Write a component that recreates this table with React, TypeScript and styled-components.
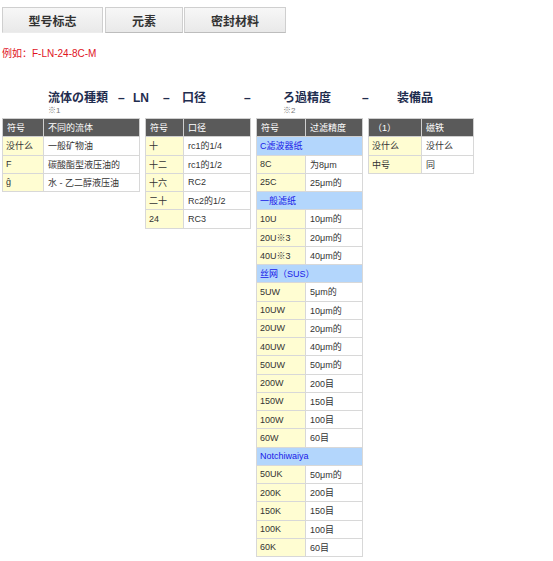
import React from "react";
import styled, { createGlobalStyle } from "styled-components";

const Global = createGlobalStyle`
  html, body { margin: 0; padding: 0; background: #fff; }
  body { font-family: "Liberation Sans", "Noto Sans CJK SC", sans-serif; color: #333; }
`;

const Page = styled.div`
  padding: 7px 0 0 2px;
  width: 553px;
  box-sizing: border-box;
`;

const Tabs = styled.div`
  display: flex;
  gap: 1px;
`;

const Tab = styled.div<{ $w: number; $active?: boolean }>`
  width: ${(p) => p.$w}px;
  height: 26px;
  box-sizing: border-box;
  display: flex;
  align-items: center;
  justify-content: center;
  font-size: 12px;
  font-weight: bold;
  color: #333;
  border: 1px solid #cfcfcf;
  border-bottom-color: ${(p) => (p.$active ? "#ececec" : "#bdbdbd")};
  background: linear-gradient(#f7f7f7, #e9e9e9);
  margin-right: ${(p) => (p.$active ? 1 : 0)}px;
`;

const Example = styled.div`
  margin-top: 15px;
  font-size: 10px;
  line-height: 12px;
  color: #e0141e;
`;

const Heading = styled.div`
  display: flex;
  margin-top: 31px;
  padding-left: 46px;
  height: 27px;
`;

const Term = styled.div<{ $w?: number }>`
  width: ${(p) => (p.$w ? `${p.$w}px` : "auto")};
  flex: none;
  display: flex;
  flex-direction: column;
`;

const TermText = styled.span`
  font-size: 12px;
  line-height: 14px;
  font-weight: bold;
  color: #1f2d4f;
  white-space: nowrap;
`;

const Note = styled.span`
  font-size: 8px;
  line-height: 10px;
  color: #777;
  margin-top: 1px;
`;

const Tables = styled.div`
  display: flex;
  align-items: flex-start;
  gap: 5px;
`;

const Table = styled.table<{ $w: number }>`
  width: ${(p) => p.$w}px;
  border-collapse: collapse;
  table-layout: fixed;
  font-size: 9px;
  border: 1px solid #d2d2d2;
`;

const Row = styled.tr`
  height: 18.25px;
`;

const Th = styled.th<{ $w?: number }>`
  box-sizing: border-box;
  width: ${(p) => (p.$w ? `${p.$w}px` : "auto")};
  background: #5a5a5a;
  color: #fff;
  font-weight: normal;
  text-align: left;
  padding: 0 4px;
  border: 1px solid #cfcfcf;
  white-space: nowrap;
  overflow: hidden;
`;

const Code = styled.td`
  background: #fffdd2;
  padding: 0 3px;
  border: 1px solid #d8d8d8;
  color: #333;
  white-space: nowrap;
  overflow: hidden;
`;

const Val = styled.td`
  background: #fff;
  padding: 0 4px;
  border: 1px solid #d8d8d8;
  color: #333;
  white-space: nowrap;
  overflow: hidden;
`;

const Group = styled.td`
  background: #b3d6fc;
  color: #1818e8;
  padding: 0 3px;
  border: 1px solid #d8d8d8;
  white-space: nowrap;
  overflow: hidden;
`;

type Item = [string, string] | string;

const DataTable = ({
  w,
  c1,
  h1,
  h2,
  items,
}: {
  w: number;
  c1: number;
  h1: string;
  h2: string;
  items: Item[];
}) => (
  <Table $w={w}>
    <tbody>
      <Row>
        <Th $w={c1}>{h1}</Th>
        <Th>{h2}</Th>
      </Row>
      {items.map((it, i) =>
        typeof it === "string" ? (
          <Row key={i}>
            <Group colSpan={2}>{it}</Group>
          </Row>
        ) : (
          <Row key={i}>
            <Code>{it[0]}</Code>
            <Val>{it[1]}</Val>
          </Row>
        )
      )}
    </tbody>
  </Table>
);

const fluid: Item[] = [
  ["没什么", "一般矿物油"],
  ["F", "碳酸酯型液压油的"],
  ["ĝ", "水 - 乙二醇液压油"],
];

const port: Item[] = [
  ["十", "rc1的1/4"],
  ["十二", "rc1的1/2"],
  ["十六", "RC2"],
  ["二十", "Rc2的1/2"],
  ["24", "RC3"],
];

const filter: Item[] = [
  "C滤波器纸",
  ["8C", "为8μm"],
  ["25C", "25μm的"],
  "一般滤纸",
  ["10U", "10μm的"],
  ["20U※3", "20μm的"],
  ["40U※3", "40μm的"],
  "丝网（SUS）",
  ["5UW", "5μm的"],
  ["10UW", "10μm的"],
  ["20UW", "20μm的"],
  ["40UW", "40μm的"],
  ["50UW", "50μm的"],
  ["200W", "200目"],
  ["150W", "150目"],
  ["100W", "100目"],
  ["60W", "60目"],
  "Notchiwaiya",
  ["50UK", "50μm的"],
  ["200K", "200目"],
  ["150K", "150目"],
  ["100K", "100目"],
  ["60K", "60目"],
];

const equip: Item[] = [
  ["没什么", "没什么"],
  ["中号", "同"],
];

export default function App() {
  return (
    <Page>
      <Global />
      <Tabs>
        <Tab $w={101} $active>型号标志</Tab>
        <Tab $w={78}>元素</Tab>
        <Tab $w={102}>密封材料</Tab>
      </Tabs>
      <Example>例如：F-LN-24-8C-M</Example>
      <Heading>
        <Term $w={70}>
          <TermText>流体の種類</TermText>
          <Note>※1</Note>
        </Term>
        <Term $w={15}><TermText>–</TermText></Term>
        <Term $w={30}><TermText>LN</TermText></Term>
        <Term $w={19}><TermText>–</TermText></Term>
        <Term $w={62}><TermText>口径</TermText></Term>
        <Term $w={39}><TermText>–</TermText></Term>
        <Term $w={79}>
          <TermText>ろ過精度</TermText>
          <Note>※2</Note>
        </Term>
        <Term $w={35}><TermText>–</TermText></Term>
        <Term><TermText>装備品</TermText></Term>
      </Heading>
      <Tables>
        <DataTable w={138} c1={41} h1="符号" h2="不同的流体" items={fluid} />
        <DataTable w={106} c1={38} h1="符号" h2="口径" items={port} />
        <DataTable w={107} c1={49} h1="符号" h2="过滤精度" items={filter} />
        <DataTable w={106} c1={53} h1="（1）" h2="磁铁" items={equip} />
      </Tables>
    </Page>
  );
}
